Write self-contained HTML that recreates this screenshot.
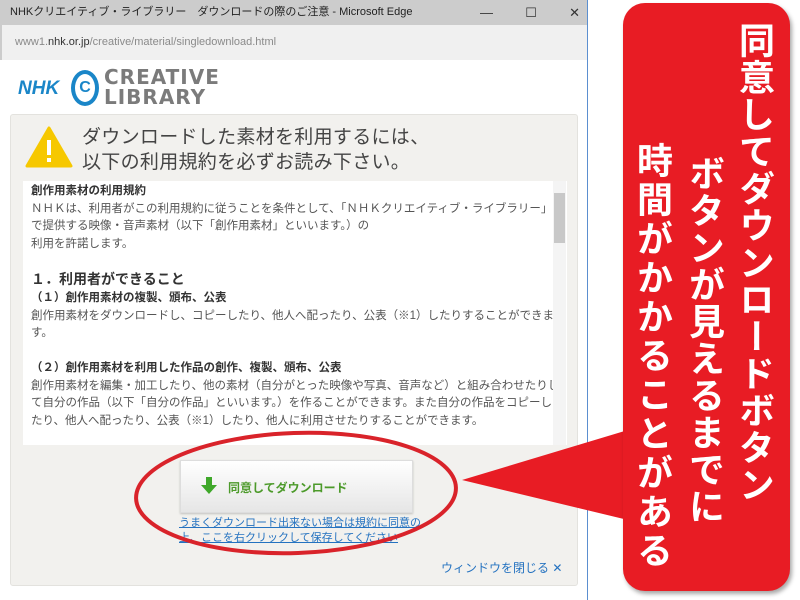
<!DOCTYPE html>
<html><head><meta charset="utf-8"><style>
*{margin:0;padding:0;box-sizing:border-box}
body{width:800px;height:600px;position:relative;overflow:hidden;background:#fff;font-family:"Liberation Sans","Noto Sans CJK JP",sans-serif}
.a{position:absolute}
.win{left:0;top:0;width:588px;height:600px;border-right:1px solid #5b8fd0;background:#fff}
.tb{left:0;top:0;width:587px;height:25px;background:#cccccc;font-size:11px;color:#222;line-height:25px;padding-left:10px}
.addr{left:0;top:25px;width:587px;height:35px;background:#f0f0f0;font-size:11px;color:#8a8a8a;line-height:35px;padding-left:13px;border-left:2px solid #ccc}
.panel{left:10px;top:114px;width:568px;height:472px;background:#f2f1ee;border:1px solid #e3e2de;border-radius:3px}
.box{left:23px;top:181px;width:544px;height:264px;background:#fff;font-size:11.5px;color:#555;line-height:17.5px;padding:2px 0 0 8px;overflow:hidden}
.box b{color:#333}
.sb{left:553px;top:181px;width:13px;height:264px;background:#f4f4f4}
.red{left:623px;top:3px;width:167px;height:588px;background:#e81c24;border-radius:22px;box-shadow:2px 3px 4px rgba(0,0,0,.35)}
.col{position:absolute;writing-mode:vertical-rl;color:#fff;font-weight:bold;font-size:36px;line-height:40px;font-family:"Noto Sans CJK JP",sans-serif;letter-spacing:1px}
</style></head><body>
<div class="a win"></div>
<div class="a tb">NHKクリエイティブ・ライブラリー　ダウンロードの際のご注意 - Microsoft Edge</div>
<div class="a" style="left:480px;top:5px;font-size:13px;color:#333;width:100px;display:flex;justify-content:space-between"><span>—</span><span>☐</span><span>✕</span></div>
<div class="a addr">www1.<span style="color:#333">nhk.or.jp</span>/creative/material/singledownload.html</div>
<div class="a" style="left:18px;top:78px;font:italic bold 19px 'Liberation Sans',sans-serif;color:#1a86c8">NHK</div>
<div class="a" style="left:71px;top:70px;width:28px;height:36px;border:4px solid #1a86c8;border-radius:50%;font:bold 16px 'Liberation Sans';color:#1a86c8;text-align:center;line-height:28px">C</div>
<div class="a" style="left:104px;top:67px;font:bold 20px/20px 'DejaVu Sans',sans-serif;color:#7b7b7b;letter-spacing:1px">CREATIVE<br>LIBRARY</div>
<div class="a panel"></div>
<svg class="a" style="left:25px;top:126px" width="48" height="42"><path d="M24 2 L46 40 L2 40 Z" fill="#f6c800" stroke="#f6c800" stroke-width="3" stroke-linejoin="round"/><rect x="22" y="14" width="4" height="15" fill="#fff"/><rect x="22" y="32" width="4" height="4" fill="#fff"/></svg>
<div class="a" style="left:82px;top:125px;font-size:19px;line-height:25px;color:#444;letter-spacing:0.3px">ダウンロードした素材を利用するには、<br>以下の利用規約を必ずお読み下さい。</div>
<div class="a box"><b>創作用素材の利用規約</b><br>ＮＨＫは、利用者がこの利用規約に従うことを条件として、「ＮＨＫクリエイティブ・ライブラリー」<br>で提供する映像・音声素材（以下「創作用素材」といいます。）の<br>利用を許諾します。<br><br><b style="font-size:14px">１．利用者ができること</b><br><b>（１）創作用素材の複製、頒布、公表</b><br>創作用素材をダウンロードし、コピーしたり、他人へ配ったり、公表（※1）したりすることができま<br>す。<br><br><b>（２）創作用素材を利用した作品の創作、複製、頒布、公表</b><br>創作用素材を編集・加工したり、他の素材（自分がとった映像や写真、音声など）と組み合わせたりし<br>て自分の作品（以下「自分の作品」といいます。）を作ることができます。また自分の作品をコピーし<br>たり、他人へ配ったり、公表（※1）したり、他人に利用させたりすることができます。</div>
<div class="a sb"><div style="margin:12px 1px 0;height:50px;background:#c8c8c8"></div></div>
<div class="a" style="left:180px;top:460px;width:233px;height:53px;background:linear-gradient(#fff,#e6e6e6);border:1px solid #ddd;box-shadow:0 1px 2px rgba(0,0,0,.2)"></div>
<svg class="a" style="left:201px;top:477px" width="16" height="17"><path d="M5 0h6v8h5l-8 9-8-9h5z" fill="#3fa82a"/></svg>
<div class="a" style="left:228px;top:479px;font-size:12px;font-weight:bold;color:#4c9a2a">同意してダウンロード</div>
<div class="a" style="left:179px;top:516px;font-size:11px;line-height:15px;color:#2472c0;text-decoration:underline">うまくダウンロード出来ない場合は規約に同意の<br>上、ここを右クリックして保存してください</div>
<div class="a" style="left:441px;top:559px;font-size:12px;color:#2472c0">ウィンドウを閉じる ✕</div>
<svg class="a" style="left:0;top:0" width="800" height="600">
<ellipse cx="296" cy="493" rx="160" ry="60" fill="none" stroke="#d9232a" stroke-width="4" transform="rotate(-2 296 493)"/>
<path d="M462 480 L628 430 L628 520 Z" fill="#e81c24"/>
</svg>
<div class="a red"></div>
<div class="col" style="left:737px;top:22px">同意してダウンロードボタン</div>
<div class="col" style="left:687px;top:155px">ボタンが見えるまでに</div>
<div class="col" style="left:635px;top:142px;letter-spacing:3px">時間がかかることがある</div>
</body></html>
